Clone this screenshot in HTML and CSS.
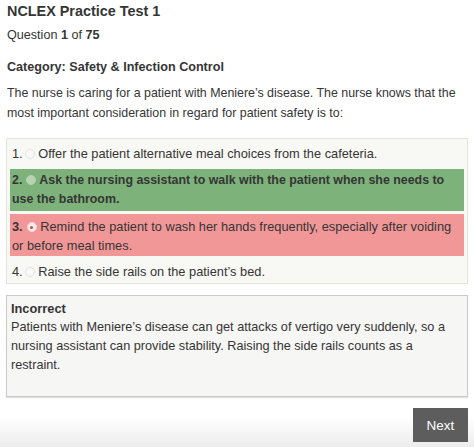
FILE: index.html
```html
<!DOCTYPE html>
<html>
<head>
<meta charset="utf-8">
<link rel="stylesheet" href="styles.css">
</head>
<body>
<div class="page">
  <h1 class="title">NCLEX Practice Test 1</h1>
  <p class="counter">Question <b>1</b> of <b>75</b></p>
  <p class="category">Category: Safety &amp; Infection Control</p>
  <p class="question">The nurse is caring for a patient with Meniere’s disease. The nurse knows that the most important consideration in regard for patient safety is to:</p>
  <div class="options">
    <div class="option opt1">1.<span class="radio"></span> Offer the patient alternative meal choices from the cafeteria.</div>
    <div class="option correct">2.<span class="radio filled"></span> Ask the nursing assistant to walk with the patient when she needs to use the bathroom.</div>
    <div class="option wrong"><b>3.</b><span class="radio checked"></span> Remind the patient to wash her hands frequently, especially after voiding or before meal times.</div>
    <div class="option opt4">4.<span class="radio"></span> Raise the side rails on the patient’s bed.</div>
  </div>
  <div class="feedback">
    <div class="fb-title">Incorrect</div>
    <div class="fb-text">Patients with Meniere’s disease can get attacks of vertigo very suddenly, so a nursing assistant can provide stability. Raising the side rails counts as a restraint.</div>
  </div>
  <div class="actions"><button class="next">Next</button></div>
</div>
</body>
</html>
```
FILE: styles.css
```css
html, body { margin: 0; padding: 0; background: #fff; }
body { font-family: "Liberation Sans", Arial, sans-serif; color: #353535; }
.page { padding: 0 6px; height: 447px; box-sizing: border-box; background: linear-gradient(to bottom, #fff 0, #fff 418px, #ececec 447px); }
.title { margin: 0; padding: 1px 0 0 1px; font-size: 14.4px; font-weight: bold; line-height: 20px; }
.counter { margin: 5px 0 0 1px; font-size: 12.6px; line-height: 18px; }
.category { margin: 14px 0 0 1px; font-size: 12.6px; font-weight: bold; line-height: 18px; }
.question { margin: 7px 0 0 1px; font-size: 12.4px; line-height: 20px; }
.options { margin-top: 15px; border: 1px solid #e3e4da; background: #f8f8f4; padding: 4px 3px 0 3px; display: flex; flex-direction: column; }
.option { font-size: 12.8px; line-height: 20px; padding: 1px 2px; }
.option.correct { margin-top: 4px; padding: 2px 2px; line-height: 19px; background: #7db27a; font-weight: bold; font-size: 12.4px; }
.option.wrong { margin-top: 3px; padding: 3px 2px 1px; line-height: 19px; background: #f29798; }
.option.opt4 { margin-top: 5px; }
.radio { display: inline-block; width: 8px; height: 8px; margin-left: 2px; border-radius: 50%; border: 1px solid #e4e4e2; background: #f9f9f7; vertical-align: -1px; position: relative; }
.radio.filled { margin-left: 4px; background: #b6d2b3; border-color: #b6d2b3; }
.radio.checked { margin-left: 4px; background: #fbeaea; border-color: #f8d6d6; }
.radio.checked::after { content: ""; position: absolute; left: 2.5px; top: 2.5px; width: 3px; height: 3px; border-radius: 50%; background: #c8484c; }
.feedback { margin-top: 11px; border: 1px solid #cbcbcb; background: #f6f6f4; padding: 3px 4px 21px 4px; box-shadow: 0 1px 1px rgba(0,0,0,0.12); }
.fb-title { font-weight: bold; font-size: 12.8px; line-height: 19px; }
.fb-text { font-size: 12.7px; line-height: 19px; }
.actions { display: flex; justify-content: flex-end; margin-top: 11px; }
.next { background: #5d5d5d; color: #fff; border: 0; font-family: "Liberation Sans", Arial, sans-serif; font-size: 13.5px; width: 55px; height: 34px; padding: 0; border-radius: 0; }
```
